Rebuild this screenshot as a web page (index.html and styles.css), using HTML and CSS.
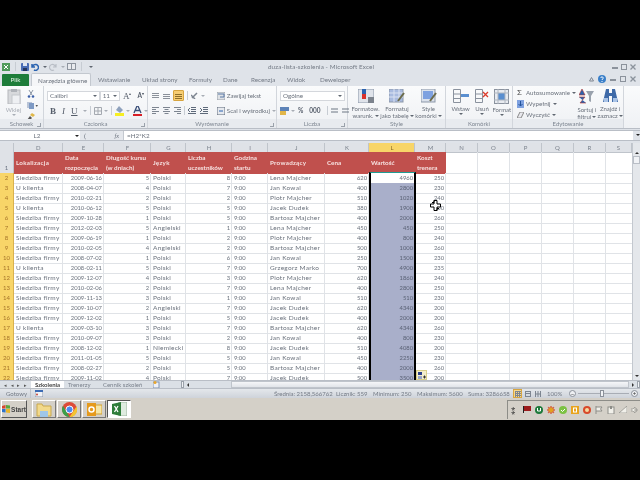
FILE: index.html
```html
<!DOCTYPE html>
<html lang="pl">
<head>
    <meta charset="UTF-8">
    <title>duza-lista-szkolenia - Microsoft Excel</title>
    <link rel="stylesheet" href="styles.css">
</head>
<body>

<div class="letterbox"></div>

<div class="window">
    <!-- Title bar -->
    <div class="titlebar">
        <div class="qat">
            <svg width="8" height="8" viewBox="0 0 8 8"><rect width="8" height="8" fill="#4f9a5a"/><path d="M2 2l4 4M6 2L2 6" stroke="#fff"/></svg>
            <i class="sep"></i>
            <svg width="8" height="8" viewBox="0 0 8 8"><rect width="8" height="8" rx="1" fill="#4a6db5"/><rect x="2" y="0" width="4" height="3" fill="#dfe6f2"/><rect x="2" y="5" width="4" height="3" fill="#25365f"/></svg>
            <svg width="8" height="8" viewBox="0 0 8 8"><path d="M1 1v3h3M1.5 4a3 3 0 1 1 1.5 3" fill="none" stroke="#2a63b0" stroke-width="1.5"/></svg>
            <span class="caret"></span>
            <svg width="8" height="8" viewBox="0 0 8 8"><path d="M7 1v3H4M6.500 4a3 3 0 1 0-1.500 3" fill="none" stroke="#b9bec6" stroke-width="1.200"/></svg>
            <span class="caret pale"></span>
            <svg width="9" height="7" viewBox="0 0 9 7"><rect width="9" height="7" fill="#8d949e"/><rect x="1" y="1" width="3" height="5" fill="#e8eaee"/><rect x="5" y="1" width="3" height="5" fill="#e8eaee"/></svg>
            <i class="sep"></i>
            <span class="caret"></span>
        </div>
        <div class="title">duza-lista-szkolenia - Microsoft Excel</div>
        <div class="winbtns">
            <svg width="6" height="6" viewBox="0 0 6 6"><rect y="3" width="6" height="2" fill="#8b929c"/></svg>
            <svg width="6" height="6" viewBox="0 0 6 6"><rect x=".5" y=".5" width="5" height="5" fill="none" stroke="#8b929c"/></svg>
            <svg width="6" height="6" viewBox="0 0 6 6"><path d="M.5.500l5 5m0-5l-5 5" stroke="#8b929c" stroke-width="1.300"/></svg>
        </div>
    </div>

    <!-- Tabs -->
    <div class="tabs">
        <div class="tab-file">Plik</div>
        <div class="tab tab-active">Narzędzia główne</div>
        <div class="tab w-wstaw">Wstawianie</div>
        <div class="tab w-uklad">Układ strony</div>
        <div class="tab w-form">Formuły</div>
        <div class="tab w-dane">Dane</div>
        <div class="tab w-rec">Recenzja</div>
        <div class="tab w-wid">Widok</div>
        <div class="tab">Deweloper</div>
        <div class="tab-icons">
            <svg width="5" height="5" viewBox="0 0 5 5"><path d="M2.500.500L4.500 4H.5z" fill="none" stroke="#7d8590"/></svg>
            <svg width="8" height="8" viewBox="0 0 8 8"><circle cx="4" cy="4" r="4" fill="#3a7fc9"/><path d="M2.800 3a1.200 1.200 0 1 1 1.600 1.200L4 5M4 6v1" stroke="#fff" fill="none"/></svg>
            <svg width="6" height="6" viewBox="0 0 6 6"><rect y="3" width="6" height="2" fill="#8b929c"/></svg>
            <svg width="6" height="6" viewBox="0 0 6 6"><rect x=".5" y=".5" width="5" height="5" fill="none" stroke="#8b929c"/></svg>
            <svg width="6" height="6" viewBox="0 0 6 6"><path d="M.5.500l5 5m0-5l-5 5" stroke="#8b929c" stroke-width="1.300"/></svg>
        </div>
    </div>

    <!-- Ribbon -->
    <div class="ribbon">
        <section class="group g-clip">
            <div class="group-body clip-body">
                <div class="big">
                    <svg width="14" height="15" viewBox="0 0 14 15"><rect x="1" y="1" width="12" height="14" fill="#d7d9dc" stroke="#b6b8bc"/><rect x="4" y="0" width="6" height="3" fill="#aeb2b8"/><rect x="5" y="6" width="8" height="9" fill="#eef0f3" stroke="#c4c7cc"/></svg>
                    <span class="pale-text">Wklej</span>
                    <span class="caret pale"></span>
                </div>
                <div class="clip-small">
                    <svg width="8" height="8" viewBox="0 0 8 8"><path d="M2 0l3 5M6 0L3 5" stroke="#8c97a6"/><circle cx="2" cy="6.500" r="1.300" fill="#3b5fa8"/><circle cx="6" cy="6.500" r="1.300" fill="#3b5fa8"/></svg>
                    <svg width="11" height="7" viewBox="0 0 11 7"><rect width="5" height="6" fill="#b9c4d6"/><rect x="2" y="1" width="5" height="6" fill="#7e9ac4"/><path d="M8.500 3h2.500l-1.200 2z" fill="#555"/></svg>
                    <svg width="8" height="8" viewBox="0 0 8 8"><path d="M5 0l3 2-2 2-3-2z" fill="#e0b84a"/><path d="M3 3L0 7l2 1 3-3z" fill="#555"/></svg>
                </div>
            </div>
            <div class="group-label">Schowek<i class="launcher"></i></div>
        </section>

        <section class="group g-font">
            <div class="group-body stack">
                <div class="tool-row">
                    <div class="select w-font">Calibri<span class="caret"></span></div>
                    <div class="select w-size">11<span class="caret"></span></div>
                    <span class="glyph">A<sup>▴</sup></span>
                    <span class="glyph small">A<sup>▾</sup></span>
                </div>
                <div class="tool-row low">
                    <b class="glyph">B</b>
                    <em class="glyph">I</em>
                    <u class="glyph">U</u>
                    <span class="caret pale"></span>
                    <i class="sep"></i>
                    <svg width="8" height="8" viewBox="0 0 8 8"><path d="M.5.500h7v7h-7zM4 .5v7M.5 4h7" fill="none" stroke="#a4a9b0"/></svg>
                    <span class="caret pale"></span>
                    <i class="sep"></i>
                    <svg width="9" height="10" viewBox="0 0 9 10"><path d="M4 0l4 4-3 3-4-3z" fill="#8fa2bd"/><rect y="7" width="9" height="3" fill="#f6ee22"/></svg>
                    <span class="caret pale"></span>
                    <svg class="color-a" width="9" height="10" viewBox="0 0 9 10"><path d="M1 7l3-7h1l3 7M2.500 4.500h4" fill="none" stroke="#3a4f78" stroke-width="1.300"/><rect y="8" width="9" height="2" fill="#d81f26"/></svg>
                    <span class="caret pale"></span>
                </div>
            </div>
            <div class="group-label">Czcionka<i class="launcher"></i></div>
        </section>

        <section class="group g-align">
            <div class="group-body align-body">
                <div class="stack align-icons">
                    <div class="tool-row">
                        <svg width="7" height="6" viewBox="0 0 7 6"><path d="M0 .5h7M0 2.500h7M0 4.500h7" stroke="#8b919a"/></svg>
                        <svg class="gap3" width="7" height="6" viewBox="0 0 7 6"><path d="M0 1.500h7M0 3.500h7M0 5.500h7" stroke="#8b919a"/></svg>
                        <span class="active-tool"><svg width="7" height="6" viewBox="0 0 7 6"><path d="M0 1.500h7M0 3.500h7M0 5.500h7" stroke="#8d6f2a"/></svg></span>
                        <i class="sep"></i>
                        <svg width="8" height="7" viewBox="0 0 8 7"><path d="M1 6l5-5M0 3l4 4" stroke="#7d8590" stroke-width="1.500"/></svg>
                        <span class="caret pale"></span>
                    </div>
                    <div class="tool-row low">
                        <svg width="7" height="7" viewBox="0 0 7 7"><path d="M0 .5h7M0 2.500h4M0 4.500h7M0 6.500h4" stroke="#7d8590"/></svg>
                        <svg class="gap3" width="7" height="7" viewBox="0 0 7 7"><path d="M0 .5h7M1.500 2.500h4M0 4.500h7M1.500 6.500h4" stroke="#7d8590"/></svg>
                        <svg class="gap3" width="7" height="7" viewBox="0 0 7 7"><path d="M0 .5h7M3 2.500h4M0 4.500h7M3 6.500h4" stroke="#7d8590"/></svg>
                        <i class="sep"></i>
                        <svg width="8" height="7" viewBox="0 0 8 7"><path d="M3 .5h5M3 2.500h5M3 4.500h5M0 6.500h8M2 1L0 3l2 2" stroke="#5e6a7a" fill="none"/></svg>
                        <svg class="gap3" width="8" height="7" viewBox="0 0 8 7"><path d="M3 .5h5M3 2.500h5M3 4.500h5M0 6.500h8M0 1l2 2-2 2" stroke="#5e6a7a" fill="none"/></svg>
                    </div>
                </div>
                <div class="stack wrap-col">
                    <div class="tool-row">
                        <svg width="8" height="8" viewBox="0 0 8 8"><rect width="8" height="8" fill="#dfe2e6" stroke="#9aa1aa"/><path d="M1 2h6v3H3" fill="none" stroke="#5b7aa8"/></svg>
                        <span class="tool-text">Zawijaj tekst</span>
                    </div>
                    <div class="tool-row low">
                        <svg width="8" height="8" viewBox="0 0 8 8"><rect width="8" height="8" fill="#e6e9ee" stroke="#5e6a7a"/><path d="M2 4h4" stroke="#2a63b0"/></svg>
                        <span class="tool-text">Scal i wyśrodkuj</span>
                        <span class="caret pale"></span>
                    </div>
                </div>
            </div>
            <div class="group-label">Wyrównanie<i class="launcher"></i></div>
        </section>

        <section class="group g-num">
            <div class="group-body stack">
                <div class="tool-row">
                    <div class="select w-format">Ogólne<span class="caret"></span></div>
                </div>
                <div class="tool-row low">
                    <svg width="9" height="8" viewBox="0 0 9 8"><rect width="9" height="4" fill="#5d83b8"/><rect y="4" width="6" height="4" fill="#e1b64a"/></svg>
                    <span class="caret pale"></span>
                    <span class="glyph small">%</span>
                    <span class="glyph small">000</span>
                    <i class="sep"></i>
                    <svg width="7" height="7" viewBox="0 0 7 7"><path d="M0 2h3M4 1v2M6 1v2M0 5h7" stroke="#6d7683" fill="none"/></svg>
                    <svg class="gap3" width="7" height="7" viewBox="0 0 7 7"><path d="M0 2h3M4 1v2M6 1v2M7 5H0" stroke="#6d7683" fill="none"/></svg>
                </div>
            </div>
            <div class="group-label">Liczba<i class="launcher"></i></div>
        </section>

        <section class="group g-style">
            <div class="group-body bigs">
                <div class="big w-big1">
                    <svg width="16" height="14" viewBox="0 0 16 14"><rect width="16" height="14" fill="#dfe3ea" stroke="#8b97a8"/><rect x="4" y="0" width="4" height="8" fill="#2a63b0"/><rect x="4" y="5" width="4" height="5" fill="#d8312c"/><rect x="10" y="8" width="6" height="6" fill="#7c838d"/></svg>
                    <span>Formatow.</span><span>warunk.<span class="caret"></span></span>
                </div>
                <div class="big w-big2">
                    <svg width="16" height="14" viewBox="0 0 16 14"><rect width="14" height="13" fill="#a9bbe0" stroke="#8b97a8"/><path d="M0 4h14M0 8h14M5 0v13M10 0v13" stroke="#dbe2f2"/><path d="M15 4L9 12" stroke="#6b6b4b" stroke-width="2"/></svg>
                    <span>Formatuj</span><span>jako tabelę<span class="caret"></span></span>
                </div>
                <div class="big w-big3">
                    <svg width="16" height="14" viewBox="0 0 16 14"><rect width="14" height="13" fill="#dce2ec" stroke="#8b97a8"/><rect x="2" y="2" width="10" height="8" fill="#7ea1e0"/><path d="M15 4L9 12" stroke="#6b6b4b" stroke-width="2"/></svg>
                    <span>Style</span><span>komórki<span class="caret"></span></span>
                </div>
            </div>
            <div class="group-label">Style</div>
        </section>

        <section class="group g-cells">
            <div class="group-body bigs">
                <div class="big w-cell1">
                    <svg width="16" height="14" viewBox="0 0 16 14"><path d="M.5.500h7v13h-7zM.5 5h7M.5 9.500h7" fill="none" stroke="#8a929e"/><rect x="8" y="5" width="8" height="3" fill="#5a8fd0"/></svg>
                    <span>Wstaw</span><span class="caret"></span>
                </div>
                <div class="big w-cell2">
                    <svg width="14" height="14" viewBox="0 0 14 14"><path d="M.5.500h7v13h-7zM.5 5h7M.5 9.500h7" fill="none" stroke="#8a929e"/><path d="M8 3l5 5m0-5L8 8" stroke="#dc3a2a" stroke-width="1.300"/></svg>
                    <span>Usuń</span><span class="caret"></span>
                </div>
                <div class="big w-cell3">
                    <svg width="15" height="15" viewBox="0 0 15 15"><rect x=".5" y=".5" width="14" height="14" fill="#e8ebf0" stroke="#8a929e"/><rect x="4" y="4" width="7" height="7" fill="#5a8fd0"/><path d="M4 0v15M11 0v15M0 4h15M0 11h15" stroke="#aeb5bf"/></svg>
                    <span>Format</span><span class="caret"></span>
                </div>
            </div>
            <div class="group-label">Komórki</div>
        </section>

        <section class="group g-edit">
            <div class="group-body edit-body">
                <div class="edit-list">
                    <div class="tool-row"><span class="sigma">Σ</span><span class="tool-text">Autosumowanie</span><span class="caret"></span></div>
                    <div class="tool-row"><svg width="7" height="8" viewBox="0 0 7 8"><rect width="7" height="8" fill="#7ea1e0"/><path d="M3.500 1v5M1.500 4l2 2 2-2" stroke="#23539c" fill="none"/></svg><span class="tool-text">Wypełnij</span><span class="caret"></span></div>
                    <div class="tool-row"><svg width="7" height="6" viewBox="0 0 7 6"><path d="M3 0h4L4 6H0z" fill="#e9e9ee" stroke="#888"/></svg><span class="tool-text">Wyczyść</span><span class="caret"></span></div>
                </div>
                <div class="big w-sort">
                    <svg width="15" height="15" viewBox="0 0 15 15"><path d="M3 0L0 6h6zM0 8h6L1 14h6" fill="#2a63b0" stroke="#b8322a" stroke-width=".6"/><path d="M7 2h8l-3 5v6l-2-1V7z" fill="#9aa2ad"/></svg>
                    <span>Sortuj i</span><span>filtruj<span class="caret"></span></span>
                </div>
                <div class="big w-find">
                    <svg width="15" height="14" viewBox="0 0 15 14"><path d="M3 0h3v4h3V0h3l3 13H9V7H6v6H0z" fill="#3f6aa8"/><rect x="1" y="9" width="4" height="4" fill="#a9c3e6"/><rect x="10" y="9" width="4" height="4" fill="#a9c3e6"/></svg>
                    <span>Znajdź i</span><span>zaznacz<span class="caret"></span></span>
                </div>
            </div>
            <div class="group-label">Edytowanie</div>
        </section>
    </div>

    <!-- Formula bar -->
    <div class="formula-bar">
        <div class="name-box">L2<span class="caret dark"></span></div>
        <div class="fx-box"><span class="fx-dots">(</span><em>fx</em></div>
        <div class="formula">=H2*K2</div>
        <div class="formula-end"><span class="caret dark"></span></div>
    </div>

    <!-- Sheet -->
    <div class="sheet-wrap">
        <div class="sheet">
            <div class="row col-head">
                <b class="corner"></b>
                <span>D</span><span>E</span><span>F</span><span>G</span><span>H</span><span>I</span><span>J</span><span>K</span><span class="picked">L</span><span>M</span>
                <div class="rest-head"><span>N</span><span>O</span><span>P</span><span>Q</span><span>R</span><span>S</span></div>
            </div>
            <div class="row table-head">
                <b>1</b>
                <span>Lokalizacja</span><span>Data
rozpoczęcia</span><span>Długość kursu
(w dniach)</span><span>Język</span><span>Liczba
uczestników</span><span>Godzina
startu</span><span>Prowadzący</span><span>Cena</span><span>Wartość</span><span>Koszt
trenera</span>
                <i class="rest"></i>
            </div>
            <div class="row first"><b>2</b><span>Siedziba firmy</span><span>2009-06-16</span><span>5</span><span>Polski</span><span>8</span><span>9:00</span><span>Lena Majcher</span><span>620</span><span>4960</span><span>250</span><i class="rest"></i></div>
            <div class="row"><b>3</b><span>U klienta</span><span>2008-04-07</span><span>4</span><span>Polski</span><span>7</span><span>9:00</span><span>Jan Kowal</span><span>400</span><span>2800</span><span>230</span><i class="rest"></i></div>
            <div class="row"><b>4</b><span>Siedziba firmy</span><span>2010-02-21</span><span>2</span><span>Polski</span><span>2</span><span>9:00</span><span>Piotr Majcher</span><span>510</span><span>1020</span><span>240</span><i class="rest"></i></div>
            <div class="row"><b>5</b><span>U klienta</span><span>2010-06-12</span><span>5</span><span>Polski</span><span>5</span><span>9:00</span><span>Jacek Dudek</span><span>380</span><span>1900</span><span>200</span><i class="rest"></i></div>
            <div class="row"><b>6</b><span>Siedziba firmy</span><span>2009-10-28</span><span>1</span><span>Polski</span><span>5</span><span>9:00</span><span>Bartosz Majcher</span><span>400</span><span>2000</span><span>260</span><i class="rest"></i></div>
            <div class="row"><b>7</b><span>Siedziba firmy</span><span>2012-02-03</span><span>5</span><span>Angielski</span><span>1</span><span>9:00</span><span>Lena Majcher</span><span>450</span><span>450</span><span>250</span><i class="rest"></i></div>
            <div class="row"><b>8</b><span>Siedziba firmy</span><span>2009-06-19</span><span>1</span><span>Polski</span><span>2</span><span>9:00</span><span>Piotr Majcher</span><span>400</span><span>800</span><span>240</span><i class="rest"></i></div>
            <div class="row"><b>9</b><span>Siedziba firmy</span><span>2010-02-05</span><span>4</span><span>Angielski</span><span>2</span><span>9:00</span><span>Bartosz Majcher</span><span>500</span><span>1000</span><span>260</span><i class="rest"></i></div>
            <div class="row"><b>10</b><span>Siedziba firmy</span><span>2008-07-02</span><span>1</span><span>Polski</span><span>6</span><span>9:00</span><span>Jan Kowal</span><span>250</span><span>1500</span><span>230</span><i class="rest"></i></div>
            <div class="row"><b>11</b><span>U klienta</span><span>2008-02-11</span><span>5</span><span>Polski</span><span>7</span><span>9:00</span><span>Grzegorz Marko</span><span>700</span><span>4900</span><span>235</span><i class="rest"></i></div>
            <div class="row"><b>12</b><span>Siedziba firmy</span><span>2009-12-07</span><span>4</span><span>Polski</span><span>3</span><span>9:00</span><span>Piotr Majcher</span><span>620</span><span>1860</span><span>240</span><i class="rest"></i></div>
            <div class="row"><b>13</b><span>Siedziba firmy</span><span>2010-02-06</span><span>2</span><span>Polski</span><span>7</span><span>9:00</span><span>Lena Majcher</span><span>400</span><span>2800</span><span>250</span><i class="rest"></i></div>
            <div class="row"><b>14</b><span>Siedziba firmy</span><span>2009-11-13</span><span>3</span><span>Polski</span><span>1</span><span>9:00</span><span>Jan Kowal</span><span>510</span><span>510</span><span>230</span><i class="rest"></i></div>
            <div class="row"><b>15</b><span>Siedziba firmy</span><span>2009-10-07</span><span>2</span><span>Angielski</span><span>7</span><span>9:00</span><span>Jacek Dudek</span><span>620</span><span>4340</span><span>200</span><i class="rest"></i></div>
            <div class="row"><b>16</b><span>Siedziba firmy</span><span>2009-12-02</span><span>1</span><span>Polski</span><span>5</span><span>9:00</span><span>Jacek Dudek</span><span>400</span><span>2000</span><span>200</span><i class="rest"></i></div>
            <div class="row"><b>17</b><span>U klienta</span><span>2009-03-10</span><span>3</span><span>Polski</span><span>7</span><span>9:00</span><span>Bartosz Majcher</span><span>620</span><span>4340</span><span>260</span><i class="rest"></i></div>
            <div class="row"><b>18</b><span>Siedziba firmy</span><span>2010-09-07</span><span>3</span><span>Polski</span><span>2</span><span>9:00</span><span>Jan Kowal</span><span>400</span><span>800</span><span>230</span><i class="rest"></i></div>
            <div class="row"><b>19</b><span>Siedziba firmy</span><span>2008-12-02</span><span>1</span><span>Niemiecki</span><span>8</span><span>9:00</span><span>Jacek Dudek</span><span>510</span><span>4080</span><span>200</span><i class="rest"></i></div>
            <div class="row"><b>20</b><span>Siedziba firmy</span><span>2011-01-05</span><span>5</span><span>Polski</span><span>5</span><span>9:00</span><span>Jan Kowal</span><span>450</span><span>2250</span><span>230</span><i class="rest"></i></div>
            <div class="row"><b>21</b><span>Siedziba firmy</span><span>2008-02-27</span><span>2</span><span>Polski</span><span>5</span><span>9:00</span><span>Bartosz Majcher</span><span>400</span><span>2000</span><span>260</span><i class="rest"></i></div>
            <div class="row"><b>22</b><span>Siedziba firmy</span><span>2009-11-02</span><span>4</span><span>Polski</span><span>7</span><span>9:00</span><span>Jacek Dudek</span><span>500</span><span>3500</span><span>200</span><i class="rest"></i></div>

            <!-- things lying over the grid -->
            <div class="selection"></div>
            <svg class="cursor" width="11" height="11" viewBox="0 0 11 11"><path d="M4 .5h3v3.500h3.500v3H7v3.500H4V7H.5V4H4z" fill="#fff" stroke="#000"/><path d="M2 2.500h2v-2M9 8.500H7v2" fill="none" stroke="#000"/></svg>
            <div class="quick-btn"><svg width="8" height="7" viewBox="0 0 8 7"><rect width="4" height="3" fill="#2a3f8c"/><rect y="4" width="4" height="3" fill="#9aa6c8"/><path d="M5 5h3M6.500 3.500v3" stroke="#333"/></svg></div>
        </div>
        <div class="vscroll">
            <span class="arrow-up"></span>
            <span class="vthumb"></span>
            <span class="arrow-down"></span>
        </div>
    </div>

    <!-- Sheet tabs -->
    <div class="sheet-tabs">
        <div class="tab-nav">
            <span>◂</span><span>◂</span><span>▸</span><span>▸</span>
        </div>
        <div class="sheet-tab on">Szkolenia</div>
        <div class="sheet-tab w-tren">Trenerzy</div>
        <div class="sheet-tab w-cen">Cennik szkoleń</div>
        <div class="sheet-tab w-new"><svg width="7" height="7" viewBox="0 0 7 7"><rect y="1" width="6" height="6" fill="#eef1f7" stroke="#7f93b5"/><circle cx="2" cy="1.500" r="1.500" fill="#e9a62b"/></svg></div>
        <div class="hscroll">
            <i class="split"></i>
            <span class="arrow-left"></span>
            <span class="hthumb"></span>
            <span class="arrow-right"></span>
            <i class="split"></i>
        </div>
    </div>

    <!-- Status bar -->
    <div class="statusbar">
        <span class="ready">Gotowy</span>
        <svg class="macro" width="8" height="7" viewBox="0 0 8 7"><rect width="8" height="7" fill="#f1f3f7" stroke="#8b97a8"/><rect width="8" height="2" fill="#3b6bb4"/><circle cx="2" cy="4.500" r="1" fill="#c9493a"/></svg>
        <div class="stats">
            <span class="s1">Średnia: 2158,566762</span>
            <span class="s2">Licznik: 559</span>
            <span class="s3">Minimum: 250</span>
            <span class="s4">Maksimum: 5600</span>
            <span class="s5">Suma: 3286658</span>
        </div>
        <div class="views">
            <span class="view on"><svg width="6" height="6" viewBox="0 0 6 6"><path d="M0 .5h6M0 2.500h6M0 4.500h6M.5 0v6M2.500 0v6M4.500 0v6" stroke="#7d8590"/></svg></span>
            <span class="view"><svg width="6" height="6" viewBox="0 0 6 6"><rect x=".5" y=".5" width="5" height="5" fill="none" stroke="#7d8590"/><path d="M0 2.500h6" stroke="#7d8590"/></svg></span>
            <span class="view"><svg width="6" height="6" viewBox="0 0 6 6"><path d="M.5 0v6M3 0v6M5.500 0v6M0 3h6" stroke="#7d8590"/></svg></span>
        </div>
        <span class="zoom-pct">100%</span>
        <span class="zoom-btn">−</span>
        <div class="slider"><i></i></div>
        <span class="zoom-btn">+</span>
    </div>
</div>

<!-- Taskbar -->
<div class="taskbar">
    <div class="start">
        <svg width="8" height="8" viewBox="0 0 8 8"><path d="M0 1l3.500-1v3.500H0z" fill="#d8452e"/><path d="M4 0l4 .5v3H4z" fill="#5aa63a"/><path d="M0 4h3.500v3.500L0 7z" fill="#2f73c9"/><path d="M4 4h4v4L4 7.500z" fill="#e9b52b"/></svg>
        Start
    </div>
    <div class="task task-folder"><svg width="16" height="15" viewBox="0 0 16 15"><path d="M1 2h5l1 2h8v10H1z" fill="#f2d98a" stroke="#c9a94e"/><rect x="4" y="9" width="8" height="6" fill="#9fc6e8"/></svg></div>
    <div class="task task-chrome"><svg width="15" height="15" viewBox="0 0 15 15"><circle cx="7.500" cy="7.500" r="7.500" fill="#dd4b39"/><path d="M1 3.800L7.500 15A7.500 7.500 0 0 1 1 3.800z" fill="#3ba14a"/><path d="M7.500 15L14.500 4.500A7.500 7.500 0 0 1 7.500 15z" fill="#f4c430"/><circle cx="7.500" cy="7.500" r="3.500" fill="#4a8af0" stroke="#fff"/></svg></div>
    <div class="task task-outlook"><svg width="15" height="13" viewBox="0 0 15 13"><rect x="5" y="2" width="10" height="9" fill="#f6e6a6" stroke="#d4a22e"/><rect width="9" height="13" fill="#e59a1c"/><circle cx="4.500" cy="6.500" r="2.500" fill="none" stroke="#fff" stroke-width="1.500"/></svg></div>
    <div class="task task-excel"><svg width="15" height="14" viewBox="0 0 15 14"><path d="M7 0h8v14H7z" fill="#dfece0" stroke="#9cb59f"/><path d="M0 2l9-2v14l-9-2z" fill="#2f7d3a"/><path d="M2.500 4l3.500 6M6 4l-3.500 6" stroke="#fff" stroke-width="1.300"/></svg></div>
    <div class="tray">
        <span class="grip">⁑</span>
        <svg width="8" height="7" viewBox="0 0 8 7"><rect width="8" height="5" fill="#9c1c1c"/><path d="M0 0v7" stroke="#222" stroke-width="2"/></svg>
        <svg width="8" height="8" viewBox="0 0 8 8"><circle cx="4" cy="4" r="4" fill="#1d7a3a"/><path d="M2.500 2v3h3V2" fill="none" stroke="#fff"/></svg>
        <svg width="8" height="8" viewBox="0 0 8 8"><path d="M4 0l1 2 2-1-1 2 2 1-2 1 1 2-2-1-1 2-1-2-2 1 1-2-2-1 2-1-1-2 2 1z" fill="#e2a01f" stroke="#c33" stroke-width=".5"/></svg>
        <svg width="8" height="8" viewBox="0 0 8 8"><circle cx="4" cy="4" r="4" fill="#7cc243"/><path d="M2 4l1.500 1.500L6 3" fill="none" stroke="#fff"/></svg>
        <svg width="8" height="8" viewBox="0 0 8 8"><rect width="8" height="8" fill="#e8a41d"/><rect x="2.500" y="2" width="3" height="4" fill="none" stroke="#fff"/></svg>
        <svg width="8" height="8" viewBox="0 0 8 8"><circle cx="4" cy="4" r="4" fill="#d8492a"/><circle cx="4" cy="4" r="2" fill="#f5d9a0"/></svg>
        <svg width="8" height="8" viewBox="0 0 8 8"><path d="M1 0v8M1 1h6l-1.500 2L7 5H1" fill="#f1f0ea" stroke="#8d8d88"/></svg>
        <svg width="8" height="8" viewBox="0 0 8 8"><rect x="1" y="1" width="6" height="7" fill="#f1f0ea" stroke="#8d8d88"/><rect x="3" y="0" width="2" height="3" fill="#8d8d88"/></svg>
        <svg width="8" height="7" viewBox="0 0 8 7"><path d="M0 7L8 0v7z" fill="#f1f0ea" stroke="#8d8d88" stroke-width=".7"/></svg>
        <svg width="8" height="8" viewBox="0 0 8 8"><path d="M0 3h2l2-2v6L2 5H0z" fill="#f1f0ea" stroke="#8d8d88" stroke-width=".7"/><path d="M5.500 2.500a2.500 2.500 0 0 1 0 3" fill="none" stroke="#8d8d88"/></svg>
    </div>
</div>

<div class="letterbox bottom"></div>

</body>
</html>
```

FILE: styles.css
```css
* {
    box-sizing: border-box;
}

body {
    margin: 0;
    width: 640px;
    height: 480px;
    overflow: hidden;
    background: #000;
    font-family: 'Lato', 'Liberation Sans', sans-serif;
    font-size: 6.3px;
    color: #6a717c;
    display: flex;
    flex-direction: column;
}

.letterbox {
    height: 60px;
    background: #000;
    flex: none;
}

.letterbox.bottom {
    flex: 1;
}

.window {
    height: 338px;
    flex: none;
    display: flex;
    flex-direction: column;
    background: #dfe3e9;
    filter: blur(0.35px);
}

svg {
    flex: none;
    display: block;
}

/* small shared bits */
.caret {
    display: inline-block;
    width: 0;
    height: 0;
    border: 2px solid transparent;
    border-top: 2px solid #5f6670;
    border-bottom: 0;
    margin-left: 2px;
    vertical-align: middle;
}

.caret.pale {
    border-top-color: #a8adb5;
}

.caret.dark {
    border-top-color: #222;
}

.sep {
    display: block;
    width: 1px;
    height: 9px;
    background: #c7ccd3;
    margin: 0 3px;
    flex: none;
}

.gap3 {
    margin-left: 4px;
}

/* title bar */
.titlebar {
    height: 13px;
    display: flex;
    align-items: center;
    padding: 0 3px 0 2px;
    background: #dfe3e9;
}

.qat {
    width: 132px;
    display: flex;
    align-items: center;
    gap: 2px;
}

.title {
    flex: 1;
    text-align: center;
    padding-right: 104px;
    color: #747b86;
    letter-spacing: 0.1px;
}

.winbtns {
    display: flex;
    gap: 3px;
    padding-right: 1px;
}

/* tabs */
.tabs {
    height: 13px;
    display: flex;
    align-items: flex-end;
    background: #dfe3e9;
    padding-left: 2px;
    position: relative;
}

.tab-file {
    width: 27px;
    height: 12px;
    line-height: 12px;
    text-align: center;
    background: #1e7d3a;
    color: #e6f3e8;
    border-radius: 1px 1px 0 0;
}

.tab {
    height: 12px;
    line-height: 12px;
    padding-left: 7px;
    color: #747b86;
    white-space: nowrap;
}

.tab-active {
    width: 60px;
    margin-left: 2px;
    padding-left: 6px;
    height: 13px;
    line-height: 13px;
    background: #f5f6f8;
    border: 1px solid #c3c8cf;
    border-bottom: 0;
    border-radius: 2px 2px 0 0;
    color: #6a717c;
}

.w-wstaw { width: 44px; }
.w-uklad { width: 47px; }
.w-form { width: 34px; }
.w-dane { width: 28px; }
.w-rec { width: 36px; }
.w-wid { width: 33px; }

.tab-icons {
    margin-left: auto;
    display: flex;
    align-items: center;
    gap: 4px;
    padding: 0 4px 2px 0;
    height: 12px;
}

/* ribbon */
.ribbon {
    height: 43px;
    display: flex;
    background: linear-gradient(#fafbfc, #eff1f4);
    border-bottom: 1px solid #b9bec6;
}

.group {
    display: flex;
    flex-direction: column;
    border-right: 1px solid #d2d6dc;
}

.group-body {
    flex: 1;
    min-height: 0;
}

.group-label {
    height: 9px;
    line-height: 9px;
    text-align: center;
    color: #7f8792;
    font-size: 6px;
    position: relative;
    background: #e8ebef;
}

.launcher {
    position: absolute;
    right: 2px;
    bottom: 1px;
    width: 4px;
    height: 4px;
    border-right: 1px solid #9aa1aa;
    border-bottom: 1px solid #9aa1aa;
}

.g-clip { width: 44px; }
.g-font { width: 104px; }
.g-align { width: 129px; }
.g-num { width: 71px; }
.g-style { width: 98px; }
.g-cells { width: 67px; }
.g-edit { width: 111px; }

.stack {
    display: flex;
    flex-direction: column;
}

.tool-row {
    height: 13px;
    margin-top: 3px;
    display: flex;
    align-items: center;
    white-space: nowrap;
}

.tool-row.low {
    margin-top: 2px;
}

.g-font .tool-row,
.g-num .tool-row {
    padding-left: 3px;
}

.select {
    height: 10px;
    line-height: 9px;
    background: #fff;
    border: 1px solid #d4d7dc;
    padding-left: 2px;
    color: #6a717c;
    display: flex;
    align-items: center;
    justify-content: space-between;
    padding-right: 2px;
}

.w-font { width: 55px; }
.w-size { width: 21px; }
.w-format { width: 65px; }

.glyph {
    font-family: 'Liberation Serif', serif;
    font-size: 9px;
    color: #555d6a;
    margin: 0 3px;
    font-style: normal;
}

em.glyph {
    font-style: italic;
}

.glyph sup {
    font-size: 4px;
}

.glyph.small {
    font-family: 'Lato', sans-serif;
    font-size: 6.5px;
    font-weight: bold;
}

.color-a {
    margin-left: 3px;
}

/* clipboard */
.clip-body {
    display: flex;
}

.clip-small {
    display: flex;
    flex-direction: column;
    gap: 4px;
    padding-top: 4px;
}

.big {
    display: flex;
    flex-direction: column;
    align-items: center;
    line-height: 6.5px;
    padding-top: 3px;
    font-size: 6px;
    white-space: nowrap;
}

.big svg {
    margin-bottom: 3px;
}

.g-clip .big {
    width: 27px;
}

.pale-text {
    color: #a8adb5;
}

/* alignment */
.align-body {
    display: flex;
}

.align-icons {
    width: 69px;
    padding-left: 4px;
}

.active-tool {
    width: 11px;
    height: 11px;
    margin-left: 3px;
    display: flex;
    align-items: center;
    justify-content: center;
    background: #f6cd73;
    border: 1px solid #d7a540;
    border-radius: 1px;
}

.tool-text {
    margin-left: 2px;
    font-size: 6.2px;
}

/* styles and cells */
.bigs {
    display: flex;
    padding-left: 3px;
}

.w-big1 { width: 29px; }
.w-big2 { width: 34px; }
.w-big3 { width: 29px; }
.w-cell1 { width: 24px; }
.w-cell2 { width: 20px; }
.w-cell3 { width: 21px; }

.big .caret {
    margin-left: 1px;
}

/* editing */
.edit-body {
    display: flex;
    padding-left: 4px;
}

.edit-list {
    width: 60px;
}

.edit-list .tool-row {
    height: 9px;
    margin-top: 2px;
}

.sigma {
    width: 7px;
    font-size: 8px;
    font-family: 'Liberation Sans', sans-serif;
    color: #444;
}

.w-sort { width: 21px; }
.w-find { width: 26px; }

/* formula bar */
.formula-bar {
    height: 11px;
    margin-top: 1px;
    display: flex;
    align-items: center;
    background: #fff;
    border-top: 1px solid #b9bec6;
    border-bottom: 1px solid #b9bec6;
}

.name-box {
    width: 80px;
    text-align: center;
    position: relative;
    padding-right: 6px;
}

.name-box .caret {
    position: absolute;
    right: 1px;
    top: 3px;
}

.fx-box {
    width: 44px;
    height: 9px;
    background: #e4e7ec;
    display: flex;
    align-items: center;
    justify-content: space-between;
    padding: 0 4px;
    border-right: 1px solid #c3c8cf;
    font-family: 'Liberation Serif', serif;
}

.formula {
    flex: 1;
    padding-left: 3px;
}

.formula-end {
    width: 7px;
    height: 9px;
    background: #dfe3e9;
    text-align: center;
    line-height: 7px;
}

/* sheet */
.sheet-wrap {
    height: 237px;
    margin-top: 2px;
    display: flex;
    background: #fff;
    overflow: hidden;
}

.sheet {
    width: 632px;
    position: relative;
    overflow: hidden;
}

.row {
    display: grid;
    grid-template-columns: 14px 49px 41px 47px 35px 46px 36px 57px 44px 46px 31px 186px;
    height: 10px;
    line-height: 10px;
    font-size: 6.5px;
    color: #6a717c;
}

.row > span {
    padding: 0 1px 0 2px;
    border-right: 1px solid #e0e3e7;
    border-bottom: 1px solid #e0e3e7;
    white-space: nowrap;
    overflow: hidden;
    letter-spacing: 0.25px;
}

.row > span:nth-child(3),
.row > span:nth-child(4),
.row > span:nth-child(6),
.row > span:nth-child(7),
.row > span:nth-child(9),
.row > span:nth-child(10),
.row > span:nth-child(11) {
    font-size: 5.8px;
    letter-spacing: 0;
}

.row > span:nth-child(3),
.row > span:nth-child(4),
.row > span:nth-child(6),
.row > span:nth-child(9),
.row > span:nth-child(10),
.row > span:nth-child(11) {
    text-align: right;
}

.row > b {
    font-weight: normal;
    font-size: 6px;
    text-align: center;
    background: #f8d568;
    color: #a6752a;
    border-bottom: 1px solid #f0c14b;
    border-right: 1px solid #d9b14e;
}

.row > span:nth-child(10) {
    background: #a9afca;
    border-bottom-color: #c2c7da;
    color: #5a6175;
}

.row.first > span:nth-child(10) {
    background: #fff;
    color: #6a717c;
}

.rest {
    display: block;
    border-bottom: 1px solid #e0e3e7;
    background: repeating-linear-gradient(90deg, transparent 0 31px, #e0e3e7 31px 32px);
}

.col-head {
    height: 9px;
    line-height: 9px;
    background: #dfe2e7;
}

.col-head > span {
    text-align: center !important;
    background: #dfe2e7 !important;
    border-color: #bfc4cb;
    color: #7a818c !important;
    font-size: 6px !important;
}

.col-head > span.picked {
    background: #f8d568 !important;
    color: #8a6a25 !important;
}

.corner {
    background: #dfe2e7 !important;
    border-color: #bfc4cb !important;
}

.rest-head {
    display: grid;
    grid-template-columns: 32px 32px 32px 32px 32px 26px;
    text-align: center;
    color: #7a818c;
    font-size: 6px;
}

.rest-head span {
    border-right: 1px solid #bfc4cb;
    border-bottom: 1px solid #bfc4cb;
}

.table-head {
    height: 21px;
    line-height: 10px;
}

.table-head > span {
    background: #c0504d !important;
    color: #f7e3e2 !important;
    font-size: 6.3px !important;
    font-weight: bold;
    text-align: left !important;
    white-space: pre-line;
    border: 0 !important;
    display: flex;
    align-items: center;
}

.table-head > b {
    background: #dfe2e7;
    color: #6a7280;
    border-color: #bfc4cb;
    padding-top: 11px;
}

/* thick border round the picked column */
.selection {
    position: absolute;
    left: 369px;
    top: 29px;
    width: 47px;
    height: 215px;
    border-left: 2px solid #000;
    border-right: 2px solid #000;
    border-top: 1px solid #1f9c94;
}

.cursor {
    position: absolute;
    left: 430px;
    top: 57px;
}

.quick-btn {
    position: absolute;
    left: 416px;
    top: 227px;
    width: 11px;
    height: 10px;
    background: #f3eecb;
    border: 1px solid #d8cf8a;
    display: flex;
    align-items: center;
    justify-content: center;
}

/* vertical scrollbar */
.vscroll {
    width: 8px;
    background: #e4e7eb;
    border-left: 1px solid #c3c8cf;
    display: flex;
    flex-direction: column;
    align-items: center;
}

.arrow-up {
    margin-top: 9px;
    border: 2px solid transparent;
    border-bottom: 2px solid #333;
    border-top: 0;
}

.vthumb {
    width: 7px;
    height: 8px;
    margin-top: 2px;
    background: #f1f3f6;
    border: 1px solid #b9bec6;
}

.arrow-down {
    margin-top: auto;
    margin-bottom: 3px;
    border: 2px solid transparent;
    border-top: 2px solid #333;
    border-bottom: 0;
}

/* sheet tabs and lower scrollbar */
.sheet-tabs {
    height: 8px;
    display: flex;
    align-items: stretch;
    background: #dbe0e6;
    line-height: 8px;
    font-size: 6px;
    border-top: 1px solid #b9bec6;
}

.tab-nav {
    width: 31px;
    display: flex;
    justify-content: space-around;
    padding: 0 2px;
    font-size: 5px;
    color: #555;
}

.sheet-tab {
    padding-left: 4px;
    color: #7a818c;
    white-space: nowrap;
}

.sheet-tab.on {
    width: 33px;
    background: #fff;
    color: #444;
    font-weight: bold;
}

.w-tren { width: 35px; }
.w-cen { width: 50px; }
.w-new { width: 32px; padding-top: 0; }

.hscroll {
    flex: 1;
    display: flex;
    align-items: center;
}

.split {
    width: 3px;
    height: 7px;
    background: #f1f3f6;
    border: 1px solid #9aa1aa;
    flex: none;
}

.arrow-left {
    margin: 0 12px 0 3px;
    border: 2px solid transparent;
    border-right: 2px solid #333;
    border-left: 0;
}

.hthumb {
    flex: 1;
    height: 7px;
    background: linear-gradient(#f5f6f8, #e1e4e9);
    border: 1px solid #bfc4cb;
    margin-left: 30px;
}

.arrow-right {
    margin: 0 3px;
    border: 2px solid transparent;
    border-left: 2px solid #333;
    border-right: 0;
}

/* status bar */
.statusbar {
    height: 10px;
    display: flex;
    align-items: center;
    background: linear-gradient(#e4e7eb, #ced3da);
    border-top: 1px solid #b9bec6;
    line-height: 9px;
    font-size: 6px;
    color: #747b86;
    white-space: nowrap;
}

.ready {
    width: 31px;
    padding-left: 6px;
    border-right: 1px solid #bfc4cb;
}

.macro {
    margin: 0 5px 0 4px;
}

.stats {
    display: flex;
    padding-left: 226px;
}

.s1 { width: 62px; }
.s2 { width: 37px; }
.s3 { width: 44px; }
.s4 { width: 51px; }
.s5 { width: 45px; }

.views {
    display: flex;
    gap: 1px;
}

.view {
    width: 9px;
    height: 9px;
    display: flex;
    align-items: center;
    justify-content: center;
}

.view.on {
    background: #f8d88a;
    border: 1px solid #d7a540;
}

.zoom-pct {
    width: 22px;
    margin-left: 5px;
}

.zoom-btn {
    width: 7px;
    height: 7px;
    line-height: 6px;
    border-radius: 50%;
    background: #eef0f3;
    border: 1px solid #8b919a;
    text-align: center;
    color: #333;
    font-size: 6px;
}

.slider {
    width: 51px;
    height: 1px;
    margin: 0 2px;
    background: #a8adb5;
    position: relative;
}

.slider i {
    position: absolute;
    left: 22px;
    top: -3px;
    width: 4px;
    height: 7px;
    background: #f1f3f6;
    border: 1px solid #8b919a;
}

/* taskbar */
.taskbar {
    height: 22px;
    flex: none;
    display: flex;
    align-items: center;
    background: #d4d0c8;
    padding-left: 1px;
    filter: blur(0.3px);
}

.start {
    width: 26px;
    height: 18px;
    display: flex;
    align-items: center;
    justify-content: center;
    gap: 1px;
    font-family: 'Liberation Sans', sans-serif;
    font-size: 6.5px;
    font-weight: bold;
    color: #444;
    background: #d4d0c8;
    border: 1px solid;
    border-color: #fff #555 #555 #fff;
}

.task {
    width: 24px;
    height: 18px;
    margin-left: 1px;
    display: flex;
    align-items: center;
    justify-content: center;
    border: 1px solid;
    border-color: #fff #777 #777 #fff;
}

.task-folder {
    margin-left: 5px;
}

.task-excel {
    background: #fff;
    border-color: #555 #fff #fff #555;
}

.tray {
    margin-left: auto;
    width: 133px;
    height: 19px;
    display: flex;
    align-items: center;
    gap: 4px;
    padding-left: 3px;
    border-left: 1px solid #8d8d88;
    border-top: 1px solid #8d8d88;
}

.grip {
    font-size: 8px;
    color: #333;
    width: 8px;
}
```
